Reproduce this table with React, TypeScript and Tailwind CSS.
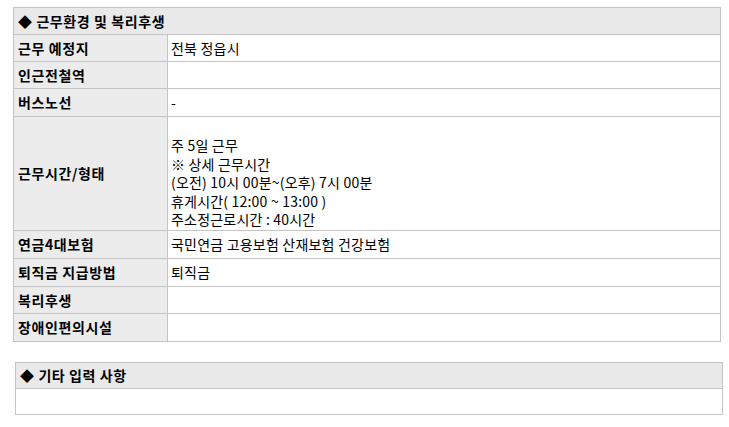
const rows: { label: string; value: string; h: string }[] = [
  { label: "근무 예정지", value: "전북 정읍시", h: "h-[27px]" },
  { label: "인근전철역", value: "", h: "h-[27px]" },
  { label: "버스노선", value: "-", h: "h-[28px]" },
]

const rows2: { label: string; value: string; h: string }[] = [
  { label: "연금4대보험", value: "국민연금 고용보험 산재보험 건강보험", h: "h-[28px]" },
  { label: "퇴직금 지급방법", value: "퇴직금", h: "h-[28px]" },
  { label: "복리후생", value: "", h: "h-[27px]" },
  { label: "장애인편의시설", value: "", h: "h-[28px]" },
]

const schedule = [
  "주 5일 근무",
  "※ 상세 근무시간",
  "(오전) 10시 00분~(오후) 7시 00분",
  "휴게시간( 12:00 ~ 13:00 )",
  "주소정근로시간 : 40시간",
]

function Row({ label, value, h }: { label: string; value: string; h: string }) {
  return (
    <div className={`flex border-t border-[#c4c4c4] ${h}`}>
      <div className="w-[154px] shrink-0 bg-[#ececec] border-r border-[#c4c4c4] flex items-center pl-[4px] font-bold text-[14px] tracking-[0.6px]">
        {label}
      </div>
      <div className="flex-1 flex items-center pl-[3px] text-[14px] tracking-[0.2px]">{value}</div>
    </div>
  )
}

function App() {
  return (
    <div
      className="min-h-screen bg-white pl-[13px] pt-[7px] text-black"
      style={{ fontFamily: '"Noto Sans CJK KR", "Noto Sans", sans-serif' }}
    >
      <div className="w-[708px] border border-[#c4c4c4]">
        <div className="h-[26px] bg-[#e9e9e9] flex items-center pl-[4px] font-bold text-[14px] tracking-[0.6px]">
          ◆ 근무환경 및 복리후생
        </div>
        {rows.map((r) => (
          <Row key={r.label} {...r} />
        ))}
        <div className="flex border-t border-[#c4c4c4] h-[114px]">
          <div className="w-[154px] shrink-0 bg-[#ececec] border-r border-[#c4c4c4] flex items-center pl-[4px] font-bold text-[14px] tracking-[0.6px]">
            근무시간/형태
          </div>
          <div className="flex-1 pl-[3px] pt-[19px] text-[14px] tracking-[0.2px] leading-[18.5px]">
            {schedule.map((s) => (
              <div key={s}>{s}</div>
            ))}
          </div>
        </div>
        {rows2.map((r) => (
          <Row key={r.label} {...r} />
        ))}
      </div>

      <div className="w-[708px] ml-[2px] mt-[20px] border border-[#c4c4c4]">
        <div className="h-[25px] bg-[#e9e9e9] flex items-center pl-[4px] font-bold text-[14px] tracking-[0.6px]">
          ◆ 기타 입력 사항
        </div>
        <div className="h-[26px] border-t border-[#c4c4c4]"></div>
      </div>
    </div>
  )
}

export default App
